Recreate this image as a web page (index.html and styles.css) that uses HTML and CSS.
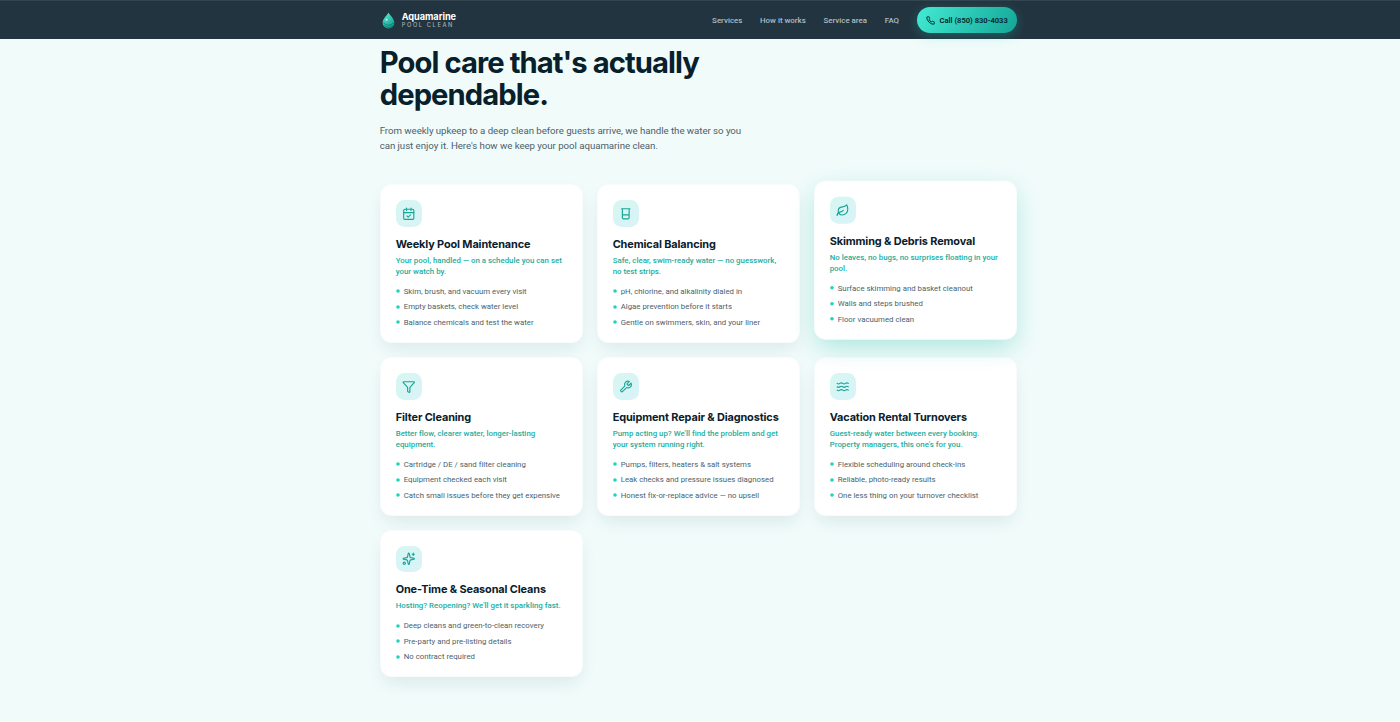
FILE: index.html
```html
<!DOCTYPE html>
<html lang="en">
<head>
<meta charset="utf-8">
<title>Aquamarine Pool Clean</title>
<link rel="stylesheet" href="styles.css">
</head>
<body>
<header class="site-header">
  <div class="wrap header-row">
    <a class="brand">
      <svg class="brand-mark" viewBox="0 0 24 32">
        <defs><linearGradient id="drop" x1="0" y1="0" x2="0.6" y2="1"><stop offset="0" stop-color="#65f2dc"/><stop offset="1" stop-color="#139e90"/></linearGradient></defs>
        <path d="M12 1C9 7 1 13 1 20a11 11 0 0 0 22 0C23 13 15 7 12 1z" fill="url(#drop)"/>
        <path d="M2 20q5 5 10 5t10-5M4 25q4 4 8 4t8-4" fill="none" stroke="#0b6f6c" stroke-width="1.300"/>
        <circle cx="8.500" cy="14.500" r="1.800" fill="#c2fff4"/>
      </svg>
      <span class="brand-text"><span class="brand-name">Aquamarine</span><span class="brand-sub">POOL CLEAN</span></span>
    </a>
    <nav class="nav">
      <a>Services</a><a>How it works</a><a>Service area</a><a>FAQ</a>
      <a class="call"><svg class="call-icon" viewBox="0 0 24 24"><path d="M22 16.920v3a2 2 0 0 1-2.180 2 19.790 19.790 0 0 1-8.630-3.070 19.500 19.500 0 0 1-6-6 19.790 19.790 0 0 1-3.070-8.670A2 2 0 0 1 4.110 2h3a2 2 0 0 1 2 1.720c.127.960.361 1.903.700 2.810a2 2 0 0 1-.450 2.110L8.090 9.910a16 16 0 0 0 6 6l1.270-1.270a2 2 0 0 1 2.110-.450c.907.339 1.850.573 2.810.700A2 2 0 0 1 22 16.920z"/></svg><span>Call (850) 830-4033</span></a>
    </nav>
  </div>
</header>
<main class="wrap">
  <h2 class="headline">Pool care that's actually<br>dependable.</h2>
  <p class="lead">From weekly upkeep to a deep clean before guests arrive, we handle the water so you<br>can just enjoy it. Here's how we keep your pool aquamarine clean.</p>
  <div class="grid">
    <article class="card">
      <div class="tile"><svg viewBox="0 0 24 24"><path d="M8 2v4M16 2v4M3 10h18M9 16l2 2 4-4"/><rect x="3" y="4" width="18" height="18" rx="2"/></svg></div>
      <h3>Weekly Pool Maintenance</h3>
      <p class="tag">Your pool, handled — on a schedule you can set<br>your watch by.</p>
      <ul><li>Skim, brush, and vacuum every visit</li><li>Empty baskets, check water level</li><li>Balance chemicals and test the water</li></ul>
    </article>
    <article class="card">
      <div class="tile"><svg viewBox="0 0 24 24"><path d="M4.500 3h15M6 3v16a2 2 0 0 0 2 2h8a2 2 0 0 0 2-2V3M6 14h12"/></svg></div>
      <h3>Chemical Balancing</h3>
      <p class="tag">Safe, clear, swim-ready water — no guesswork,<br>no test strips.</p>
      <ul><li>pH, chlorine, and alkalinity dialed in</li><li>Algae prevention before it starts</li><li>Gentle on swimmers, skin, and your liner</li></ul>
    </article>
    <article class="card raised">
      <div class="tile"><svg viewBox="0 0 24 24"><path d="M11 20A7 7 0 0 1 9.800 6.100C15.500 5 17 4.480 19 2c1 2 2 4.180 2 8 0 5.500-4.780 10-10 10Z"/><path d="M2 21c0-3 1.850-5.360 5.080-6C9.500 14.520 12 13 13 12"/></svg></div>
      <h3>Skimming &amp; Debris Removal</h3>
      <p class="tag">No leaves, no bugs, no surprises floating in your<br>pool.</p>
      <ul><li>Surface skimming and basket cleanout</li><li>Walls and steps brushed</li><li>Floor vacuumed clean</li></ul>
    </article>
    <article class="card">
      <div class="tile"><svg viewBox="0 0 24 24"><path d="M10 20a1 1 0 0 0 .553.895l2 1A1 1 0 0 0 14 21v-7a2 2 0 0 1 .517-1.341L21.740 4.670A1 1 0 0 0 21 3H3a1 1 0 0 0-.742 1.670l7.225 7.989A2 2 0 0 1 10 14z"/></svg></div>
      <h3>Filter Cleaning</h3>
      <p class="tag">Better flow, clearer water, longer-lasting<br>equipment.</p>
      <ul><li>Cartridge / DE / sand filter cleaning</li><li>Equipment checked each visit</li><li>Catch small issues before they get expensive</li></ul>
    </article>
    <article class="card">
      <div class="tile"><svg viewBox="0 0 24 24"><path d="M14.700 6.300a1 1 0 0 0 0 1.400l1.600 1.600a1 1 0 0 0 1.400 0l3.770-3.770a6 6 0 0 1-7.940 7.940l-6.910 6.910a2.120 2.120 0 0 1-3-3l6.910-6.910a6 6 0 0 1 7.940-7.940l-3.760 3.760z"/></svg></div>
      <h3>Equipment Repair &amp; Diagnostics</h3>
      <p class="tag">Pump acting up? We'll find the problem and get<br>your system running right.</p>
      <ul><li>Pumps, filters, heaters &amp; salt systems</li><li>Leak checks and pressure issues diagnosed</li><li>Honest fix-or-replace advice — no upsell</li></ul>
    </article>
    <article class="card">
      <div class="tile"><svg viewBox="0 0 24 24"><path d="M2 6c.600.500 1.200 1 2.500 1C7 7 7 5 9.500 5c2.600 0 2.400 2 5 2 2.500 0 2.500-2 5-2 1.300 0 1.900.500 2.500 1M2 12c.600.500 1.200 1 2.500 1 2.500 0 2.500-2 5-2 2.600 0 2.400 2 5 2 2.500 0 2.500-2 5-2 1.300 0 1.900.500 2.500 1M2 18c.600.500 1.200 1 2.500 1 2.500 0 2.500-2 5-2 2.600 0 2.400 2 5 2 2.500 0 2.500-2 5-2 1.300 0 1.900.500 2.500 1"/></svg></div>
      <h3>Vacation Rental Turnovers</h3>
      <p class="tag">Guest-ready water between every booking.<br>Property managers, this one's for you.</p>
      <ul><li>Flexible scheduling around check-ins</li><li>Reliable, photo-ready results</li><li>One less thing on your turnover checklist</li></ul>
    </article>
    <article class="card">
      <div class="tile"><svg viewBox="0 0 24 24"><path d="M11.017 2.814a1 1 0 0 1 1.966 0l1.051 5.558a2 2 0 0 0 1.594 1.594l5.558 1.051a1 1 0 0 1 0 1.966l-5.558 1.051a2 2 0 0 0-1.594 1.594l-1.051 5.558a1 1 0 0 1-1.966 0l-1.051-5.558a2 2 0 0 0-1.594-1.594l-5.558-1.051a1 1 0 0 1 0-1.966l5.558-1.051a2 2 0 0 0 1.594-1.594zM20 2v4M22 4h-4"/><circle cx="4" cy="20" r="2"/></svg></div>
      <h3>One-Time &amp; Seasonal Cleans</h3>
      <p class="tag">Hosting? Reopening? We'll get it sparkling fast.</p>
      <ul><li>Deep cleans and green-to-clean recovery</li><li>Pre-party and pre-listing details</li><li>No contract required</li></ul>
    </article>
  </div>
</main>
</body>
</html>
```
FILE: styles.css
```css
* { box-sizing: border-box; margin: 0; padding: 0; }
body { background: #f0fbfa; font-family: Roboto, "Liberation Sans", sans-serif; color: #4b5f6b; height: 722px; overflow: hidden; }
.wrap { width: 637px; margin-left: 379.700px; }
.site-header { height: 39px; background: #22343f; border-top: 1px solid #34454f; }
.header-row { display: flex; align-items: center; justify-content: space-between; height: 38px; }
.brand { display: flex; align-items: center; gap: 7px; padding-left: 2px; }
.brand-mark { width: 13px; height: 17px; }
.brand-text { display: flex; flex-direction: column; font-family: Inter, sans-serif; }
.brand-name { font-size: 9.200px; line-height: 9px; font-weight: 700; color: #fff; letter-spacing: -0.040px; }
.brand-sub { font-size: 5.700px; line-height: 8px; font-weight: 500; color: #a6b2b9; letter-spacing: 1.600px; }
.nav { display: flex; align-items: center; gap: 17.700px; font-size: 7.900px; font-weight: 500; color: #b0bcc2; }
.call { display: flex; align-items: center; justify-content: center; gap: 5px; width: 100px; height: 26.500px; border-radius: 14px; background: linear-gradient(120deg, #43ebd4, #14a596); color: #06202c; font-weight: 600; font-size: 7.600px; box-shadow: 0 3px 12px rgba(30, 210, 190, .28); white-space: nowrap; }
.call-icon { width: 9px; height: 9px; fill: none; stroke: currentColor; stroke-width: 2.600; stroke-linejoin: round; }
.headline { margin-top: 8px; font-family: Inter, sans-serif; font-size: 29.200px; line-height: 32px; font-weight: 700; color: #07202b; letter-spacing: -0.920px; white-space: nowrap; }
.lead { margin-top: 11.500px; font-size: 9.700px; line-height: 15.600px; letter-spacing: -0.045px; white-space: nowrap; }
.grid { display: grid; grid-template-columns: repeat(3, 1fr); gap: 14px; margin-top: 30.800px; }
.card { background: #fff; border: 1px solid #f8fcfc; border-radius: 11px; padding: 15px; height: 158.700px; box-shadow: 0 8px 18px -4px rgba(15, 60, 65, .1); white-space: nowrap; }
.card:last-child { height: 147.500px; }
.raised { transform: translateY(-3.300px); box-shadow: 0 9px 24px -3px rgba(20, 184, 166, .32); }
.tile { width: 26.500px; height: 26.500px; border-radius: 8.500px; background: linear-gradient(135deg, #d5f7f2, #daf2f7); display: grid; place-items: center; }
.tile svg { width: 13.500px; height: 13.500px; fill: none; stroke: #17a596; stroke-width: 2; stroke-linecap: round; stroke-linejoin: round; }
.card h3 { margin-top: 10px; font-family: Inter, sans-serif; font-size: 10.900px; line-height: 15px; font-weight: 700; color: #0a202c; letter-spacing: -0.120px; }
.tag { margin-top: 3px; font-size: 7.850px; line-height: 11px; font-weight: 500; color: #22ae9e; letter-spacing: 0.010px; }
.card ul { list-style: none; margin-top: 9px; display: grid; gap: 4.500px; }
.card li { display: flex; align-items: center; gap: 4px; font-size: 7.800px; line-height: 11px; letter-spacing: 0.010px; }
.card li::before { content: ""; width: 4px; height: 4px; border-radius: 50%; background: #22d3bb; transform: scale(.9); }
```
